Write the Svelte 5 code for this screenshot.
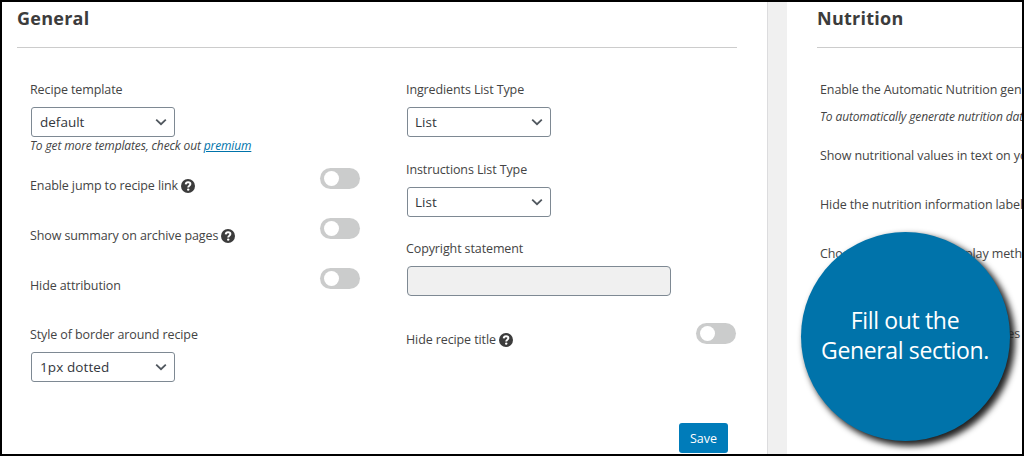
<script>
let template = 'default';
let borderStyle = '1px dotted';
let ingredientsType = 'List';
let instructionsType = 'List';
let copyright = '';

let toggles = {
    jump: false,
    summary: false,
    attribution: false,
    title: false
};

const leftToggles = [
    { key: 'jump', label: 'Enable jump to recipe link', help: true },
    { key: 'summary', label: 'Show summary on archive pages', help: true },
    { key: 'attribution', label: 'Hide attribution', help: false }
];

function flip(key) {
    toggles[key] = !toggles[key];
}
</script>

{#snippet chevron()}
    <svg class="chevron" viewBox="0 0 12 8" width="12" height="8">
        <path d="M1.2 1.6 L6 6.2 L10.8 1.6" fill="none" stroke="#50575e" stroke-width="1.8" />
    </svg>
{/snippet}

{#snippet helpIcon()}
    <svg class="help" viewBox="0 0 14 14" width="14" height="14">
        <circle cx="7" cy="7" r="7" fill="#3c3c3c" />
        <path d="M4.7 5.4 C4.8 3.9 5.8 3.2 7.1 3.2 C8.5 3.2 9.4 4 9.4 5.1 C9.4 6.7 7.2 6.7 7.2 8.4" fill="none" stroke="#fff" stroke-width="1.9" />
        <circle cx="7.2" cy="10.6" r="1.2" fill="#fff" />
    </svg>
{/snippet}

{#snippet toggleRow(key, label, help)}
    <div class="toggle-row">
        <span class="label">{label}</span>
        {#if help}{@render helpIcon()}{/if}
        <button class="toggle" class:on={toggles[key]} aria-label={label} onclick={() => flip(key)}>
            <span class="knob"></span>
        </button>
    </div>
{/snippet}

<div class="frame">
    <section class="panel general">
        <h2>General</h2>
        <div class="columns">
            <div class="column">
                <div class="field template">
                    <span class="label">Recipe template</span>
                    <button class="select">{template}{@render chevron()}</button>
                    <p class="hint">To get more templates, check out <a href="#premium">premium</a></p>
                </div>
                {#each leftToggles as item}
                    {@render toggleRow(item.key, item.label, item.help)}
                {/each}
                <div class="field border-style">
                    <span class="label">Style of border around recipe</span>
                    <button class="select">{borderStyle}{@render chevron()}</button>
                </div>
            </div>
            <div class="column">
                <div class="field ingredients">
                    <span class="label">Ingredients List Type</span>
                    <button class="select">{ingredientsType}{@render chevron()}</button>
                </div>
                <div class="field instructions">
                    <span class="label">Instructions List Type</span>
                    <button class="select">{instructionsType}{@render chevron()}</button>
                </div>
                <div class="field copyright">
                    <span class="label">Copyright statement</span>
                    <input type="text" aria-label="Copyright statement" value={copyright} />
                </div>
                <div class="title-row">
                    {@render toggleRow('title', 'Hide recipe title', true)}
                </div>
            </div>
        </div>
        <button class="save">Save</button>
    </section>

    <section class="panel nutrition">
        <h2>Nutrition</h2>
        <div class="settings">
            <p class="label">Enable the Automatic Nutrition gen</p>
            <p class="hint">To automatically generate nutrition dat</p>
            <p class="label values">Show nutritional values in text on yo</p>
            <p class="label hide-info">Hide the nutrition information label</p>
            <p class="label method"><span>Choo</span><span>play meth</span></p>
            <p class="label daily">es</p>
        </div>
    </section>

    <div class="callout">Fill out the<br />General section.</div>
</div>

<style>
    :global(body) {
        margin: 0;
        overflow: hidden;
    }

    .frame {
        position: relative;
        box-sizing: border-box;
        display: flex;
        gap: 19px;
        width: 1024px;
        height: 456px;
        border: 2px solid #000;
        background: #f0f0f0;
        overflow: hidden;
        font-family: "Open Sans", "Noto Sans", sans-serif;
        font-size: 12.5px;
        line-height: 18px;
        color: #444;
    }

    .panel {
        box-sizing: border-box;
        background: #fff;
        white-space: nowrap;
    }

    .general {
        display: flex;
        flex-direction: column;
        flex: 0 0 766px;
        padding: 0 30px 0 15px;
        border-right: 1px solid #dcdcde;
    }

    .nutrition {
        flex: 1;
        min-width: 0;
        padding-left: 30px;
        overflow: hidden;
    }

    h2 {
        box-sizing: border-box;
        height: 46px;
        margin: 0;
        padding-top: 4px;
        border-bottom: 1px solid #ccc;
        font-size: 18px;
        line-height: 25px;
        font-weight: 700;
        letter-spacing: 0.25px;
        color: #3c3c3c;
    }

    p {
        margin: 0;
    }

    .columns {
        display: flex;
        gap: 46px;
        padding: 33px 0 0 13px;
    }

    .column {
        width: 330px;
    }

    .field {
        display: flex;
        flex-direction: column;
        align-items: flex-start;
    }

    .label {
        letter-spacing: -0.11px;
    }

    .template {
        height: 87px;
    }

    .border-style {
        padding-top: 8px;
    }

    .ingredients {
        height: 80px;
    }

    .instructions {
        height: 79px;
    }

    .copyright {
        height: 83px;
    }

    .select {
        box-sizing: border-box;
        display: flex;
        align-items: center;
        justify-content: space-between;
        width: 144px;
        height: 30px;
        margin: 8px 0 0 1px;
        padding: 0 7px 0 8px;
        border: 1px solid #7e8993;
        border-radius: 3px;
        background: #fff;
        color: #32373c;
        font-family: inherit;
        font-size: 13.5px;
    }

    .border-style .select {
        letter-spacing: 0.1px;
    }

    .ingredients .select,
    .instructions .select {
        padding-left: 7px;
    }

    input {
        box-sizing: border-box;
        width: 264px;
        height: 30px;
        margin: 8px 0 0 1px;
        border: 1px solid #7e8993;
        border-radius: 4px;
        background: #f0f0f0;
    }

    .hint {
        font-size: 12px;
        font-style: italic;
        letter-spacing: -0.13px;
    }

    .hint a {
        color: #0073aa;
    }

    .toggle-row {
        display: flex;
        align-items: flex-start;
        height: 50px;
    }

    .toggle-row .label {
        padding-top: 9px;
    }

    .title-row .label {
        padding-top: 8px;
    }

    .help {
        margin: 11px 0 0 3px;
    }

    .title-row .help {
        margin-top: 10px;
    }

    .toggle {
        box-sizing: border-box;
        display: flex;
        width: 40px;
        height: 21px;
        margin-left: auto;
        padding: 3px 4px;
        border: none;
        border-radius: 11px;
        background: #cbcccc;
    }

    .toggle.on {
        justify-content: flex-end;
        background: #0073aa;
    }

    .knob {
        width: 15px;
        height: 15px;
        border-radius: 50%;
        background: #fff;
    }

    .save {
        flex: none;
        align-self: flex-end;
        width: 49px;
        height: 30px;
        margin: auto 9px 1px 0;
        padding: 0;
        border: none;
        border-radius: 3px;
        background: #007cba;
        color: #fff;
        font-family: inherit;
        font-size: 12.5px;
    }

    .settings {
        padding: 33px 0 0 3px;
    }

    .settings .hint {
        margin-top: 9px;
    }

    .settings .values {
        margin-top: 21px;
    }

    .settings .hide-info,
    .settings .method {
        margin-top: 31px;
    }

    .settings .method {
        display: flex;
        justify-content: space-between;
        width: 202px;
    }

    .settings .daily {
        width: 200px;
        margin-top: 62px;
        text-align: right;
    }

    .callout {
        position: absolute;
        left: 799px;
        top: 230px;
        box-sizing: border-box;
        display: flex;
        align-items: center;
        justify-content: center;
        width: 209px;
        height: 209px;
        padding: 0 1px 3px 0;
        border-radius: 50%;
        background: #0073aa;
        box-shadow: 4px 4px 6px 1px #222;
        color: #fff;
        font-size: 23px;
        line-height: 30px;
        letter-spacing: -0.35px;
        text-align: center;
        white-space: nowrap;
    }
</style>
